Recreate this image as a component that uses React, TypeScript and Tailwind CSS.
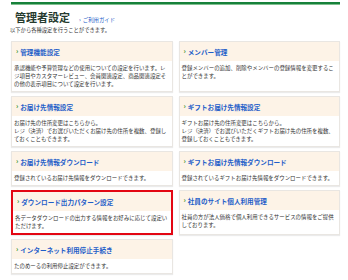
import React from "react";

type Item = { title: string; body: string[]; highlight?: boolean };

const items: Item[] = [
  {
    title: "管理機能設定",
    body: [
      "承認機能や予算管理などの使用についての設定を行います。レ",
      "ジ項目やカスタマーレビュー、会員関連設定、商品関連設定そ",
      "の他の表示項目について設定を行います。",
    ],
  },
  { title: "メンバー管理", body: ["登録メンバーの追加、削除やメンバーの登録情報を変更するこ", "とができます。"] },
  {
    title: "お届け先情報設定",
    body: ["お届け先の住所変更はこちらから。", "レジ（決済）でお選びいただくお届け先の住所を複数、登録し", "ておくこともできます。"],
  },
  {
    title: "ギフトお届け先情報設定",
    body: ["ギフトお届け先の住所変更はこちらから。", "レジ（決済）でお選びいただくギフトお届け先の住所を複数、", "登録しておくこともできます。"],
  },
  { title: "お届け先情報ダウンロード", body: ["登録されているお届け先情報をダウンロードできます。"] },
  { title: "ギフトお届け先情報ダウンロード", body: ["登録されているギフトお届け先情報をダウンロードできます。"] },
  {
    title: "ダウンロード出力パターン設定",
    body: ["各データダウンロードの出力する情報をお好みに応じて設定い", "ただけます。"],
    highlight: true,
  },
  { title: "社員のサイト個人利用管理", body: ["社員の方が法人価格で個人利用できるサービスの情報をご提供", "しております。"] },
  { title: "インターネット利用停止手続き", body: ["たのめーるの利用停止設定ができます。"] },
];

function Card({ item }: { item: Item }) {
  return (
    <div
      className={
        "flex flex-col bg-white shadow-[0_1px_1px_rgba(0,0,0,0.08)] " +
        (item.highlight ? "border-2 border-[#e30613]" : "border border-[#e9e6e2]")
      }
    >
      <div className="bg-[#fdf3e7] h-[19px] shrink-0 flex items-center pl-[4px] text-[6.6px] font-bold text-[#1f5ec9] leading-none whitespace-nowrap">
        <span className="text-[#2d8a23] mr-[2px] font-bold text-[7px]">›</span>
        {item.title}
      </div>
      <div className="px-[2px] pt-[3px] pb-[3px] text-[5.45px] leading-[8px] text-[#333]">
        {item.body.map((b, i) => (
          <div key={i} className="whitespace-nowrap">
            {b}
          </div>
        ))}
      </div>
    </div>
  );
}

export default function App() {
  return (
    <div
      className="w-[348px] h-[280px] bg-white overflow-hidden"
      style={{ fontFamily: '"Noto Sans CJK JP", "Noto Sans", sans-serif' }}
    >
      <div className="ml-[11px] mr-[8px] pt-[2px]">
        <div className="h-[2px] bg-[#17813a]" />
        <div className="h-[1px] bg-[#7fbf8f]" />
        <div className="flex items-end mt-[6px] ml-[4px] h-[12px]">
          <span className="text-[11px] font-bold text-[#263a2e] leading-none">管理者設定</span>
          <span className="ml-[9px] mb-[0px] text-[5.4px] text-[#1f5ec9] leading-none">
            <span className="mr-[2px] font-bold">›</span>ご利用ガイド
          </span>
        </div>
      </div>
      <div className="ml-[10px] mt-[5px] text-[5.3px] text-[#333] leading-none">以下から各種設定を行うことができます。</div>
      <div className="ml-[11px] mr-[8px] mt-[8px] grid grid-cols-2 gap-x-[6px] gap-y-[4px]">
        {items.map((it, i) => (
          <Card key={i} item={it} />
        ))}
      </div>
    </div>
  );
}
